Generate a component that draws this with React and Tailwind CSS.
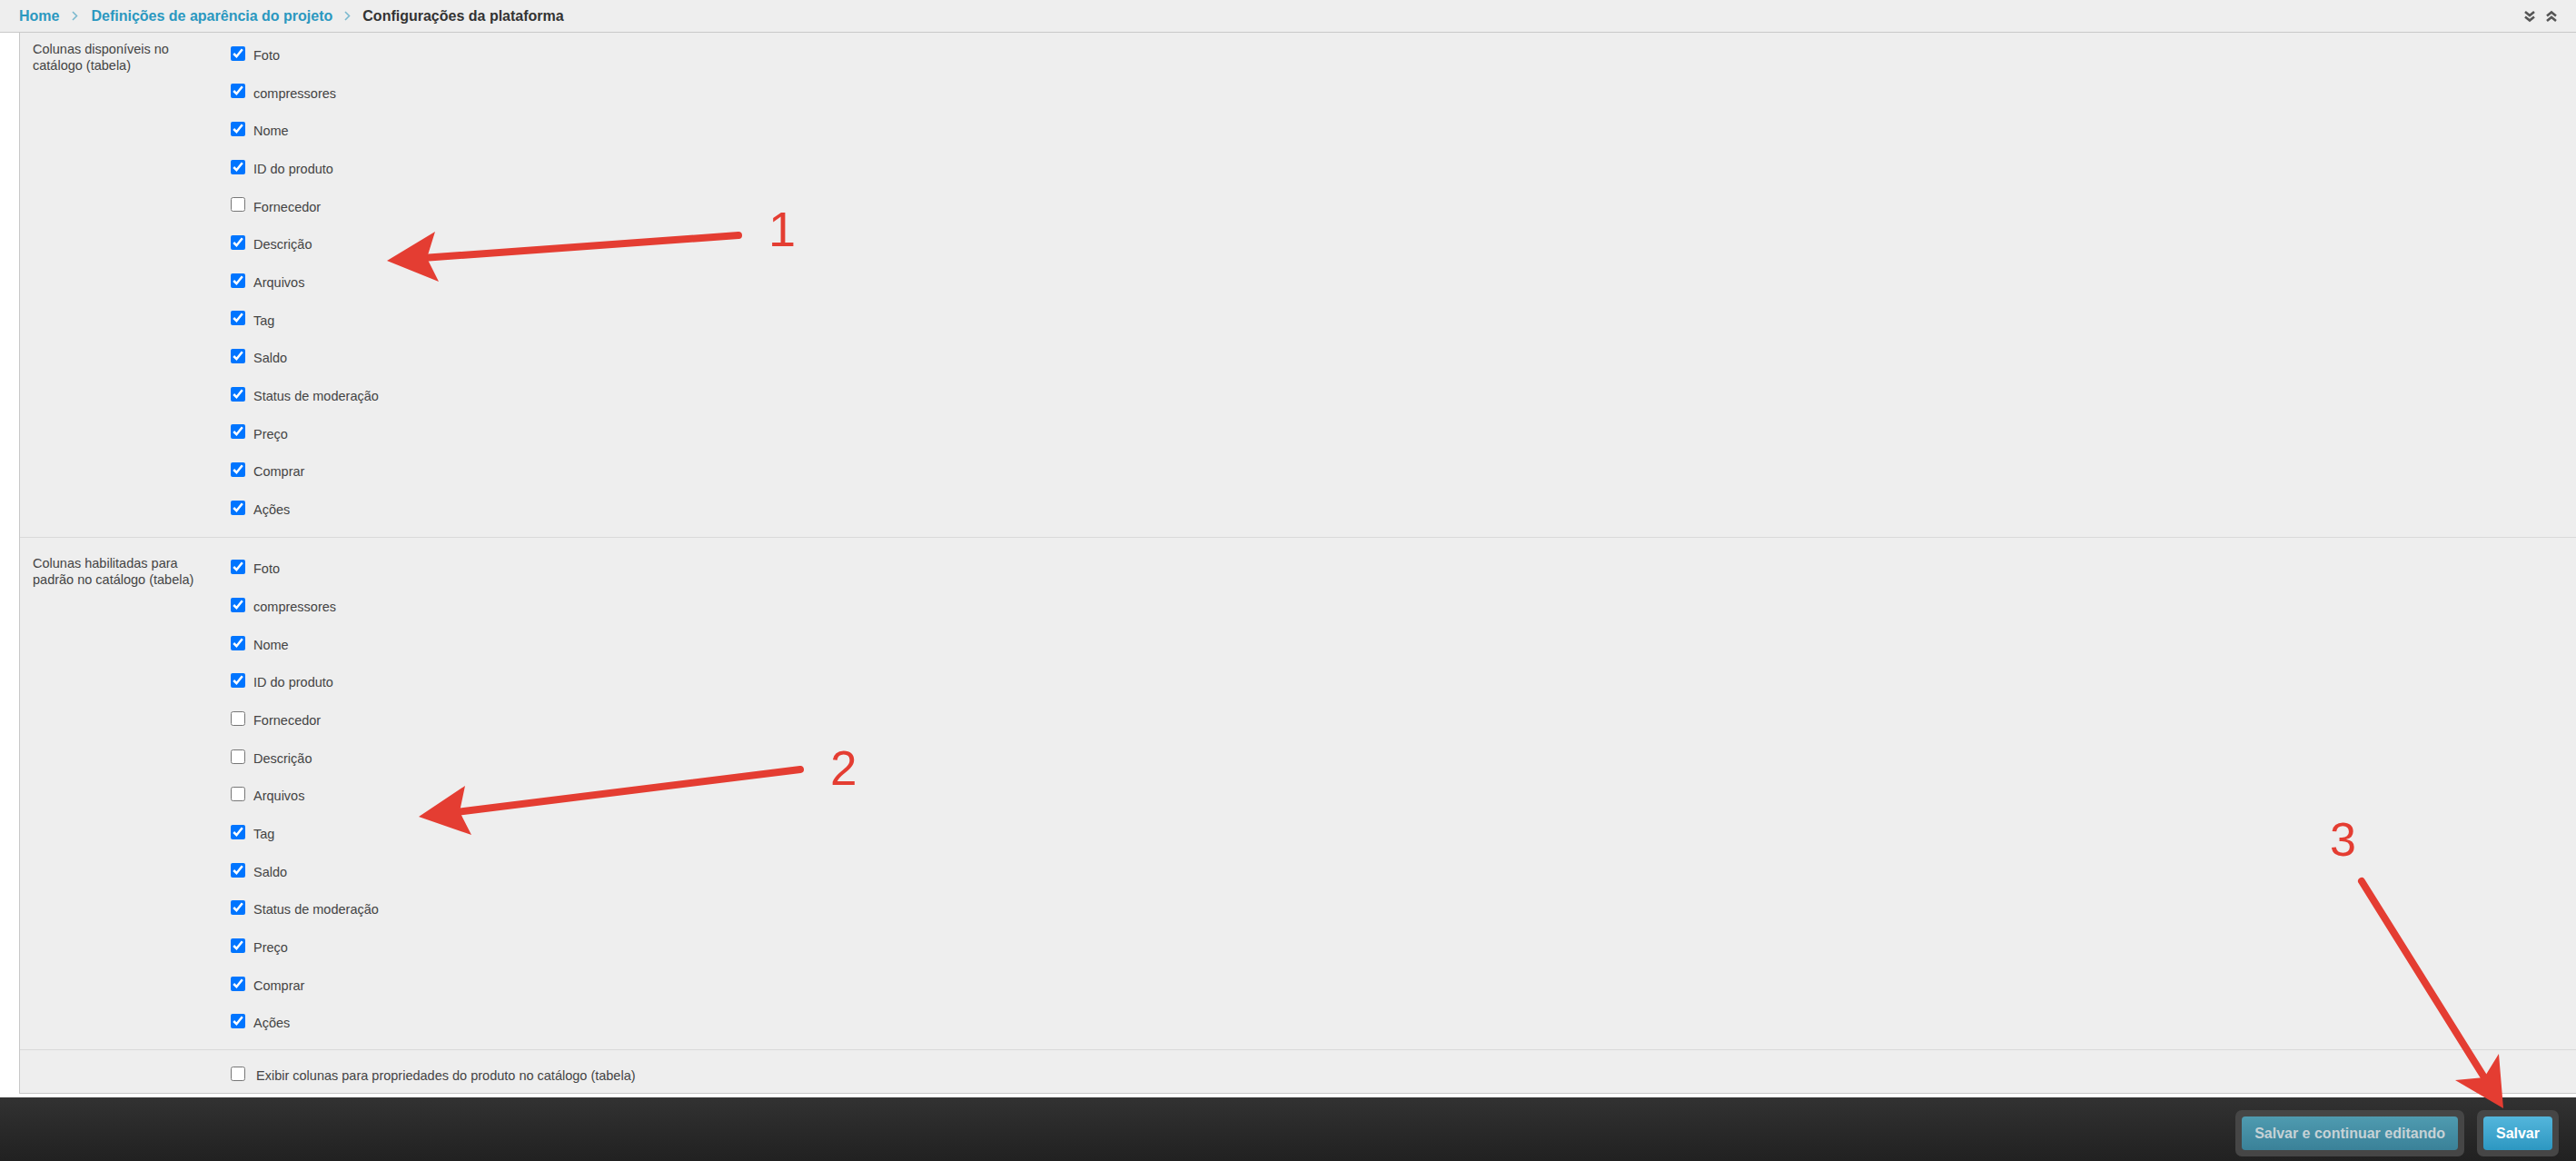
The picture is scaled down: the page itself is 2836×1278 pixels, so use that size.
import React from "react";

const sec1 = [
  ["Foto", true],
  ["compressores", true],
  ["Nome", true],
  ["ID do produto", true],
  ["Fornecedor", false],
  ["Descrição", true],
  ["Arquivos", true],
  ["Tag", true],
  ["Saldo", true],
  ["Status de moderação", true],
  ["Preço", true],
  ["Comprar", true],
  ["Ações", true],
];

const sec2 = [
  ["Foto", true],
  ["compressores", true],
  ["Nome", true],
  ["ID do produto", true],
  ["Fornecedor", false],
  ["Descrição", false],
  ["Arquivos", false],
  ["Tag", true],
  ["Saldo", true],
  ["Status de moderação", true],
  ["Preço", true],
  ["Comprar", true],
  ["Ações", true],
];

function Row({ label, checked }) {
  return (
    <label className="h-[41.67px] flex items-center">
      <input type="checkbox" defaultChecked={checked} className="w-4 h-4 shrink-0" />
      <span className="ml-[9px] pt-[6px] text-[14.5px] text-[#444]">{label}</span>
    </label>
  );
}

function Section({ title, items, className }) {
  return (
    <div className={"flex " + className}>
      <div className="w-[232px] shrink-0 pl-[14px] pt-[7px]">
        <div className="w-[185px] text-[14.5px] leading-[18px] text-[#444]">{title}</div>
      </div>
      <div className="flex flex-col">
        {items.map(([l, c], i) => (
          <Row key={i} label={l} checked={c} />
        ))}
      </div>
    </div>
  );
}

function Sep() {
  return (
    <svg width="7" height="11" viewBox="0 0 7 11" className="shrink-0">
      <polyline points="1,1 5.5,5.5 1,10" fill="none" stroke="#7bb9cf" strokeWidth="1.6" />
    </svg>
  );
}

export default function App() {
  return (
    <div className="relative w-[2836px] h-[1278px] flex flex-col bg-white font-['Liberation_Sans',Arial,sans-serif] overflow-hidden">
      {/* header */}
      <div className="h-[36px] shrink-0 border-b border-[#c9c9c9] bg-[#eeeeee] flex items-center pl-[21px] pr-[20px]">
        <div className="flex items-center text-[16px] font-bold">
          <span className="text-[#2b98c0]">Home</span>
          <span className="mx-[14px] flex"><Sep /></span>
          <span className="text-[#2b98c0]">Definições de aparência do projeto</span>
          <span className="mx-[13px] flex"><Sep /></span>
          <span className="text-[#333]">Configurações da plataforma</span>
        </div>
        <div className="ml-auto flex items-center gap-[10px]">
          <svg width="14" height="14" viewBox="0 0 14 14">
            <polyline points="2,2 7,6 12,2" fill="none" stroke="#555" strokeWidth="2.6" />
            <polyline points="2,7.5 7,11.5 12,7.5" fill="none" stroke="#555" strokeWidth="2.6" />
          </svg>
          <svg width="14" height="14" viewBox="0 0 14 14">
            <polyline points="2,6.5 7,2.5 12,6.5" fill="none" stroke="#555" strokeWidth="2.6" />
            <polyline points="2,12 7,8 12,12" fill="none" stroke="#555" strokeWidth="2.6" />
          </svg>
        </div>
      </div>

      {/* main */}
      <div className="flex-1 pl-[21px] flex flex-col">
        <div className="border-l border-b border-[#c8c8c8] bg-[#eeeeee]">
          <Section
            title="Colunas disponíveis no catálogo (tabela)"
            items={sec1}
            className="pt-[2px] pb-[11px]"
          />
          <Section
            title="Colunas habilitadas para padrão no catálogo (tabela)"
            items={sec2}
            className="border-t border-[#d9d9d9] pt-[12px] pb-[10px]"
          />
          <div className="flex border-t border-[#d9d9d9] pt-[5px]">
            <div className="w-[232px] shrink-0" />
            <label className="h-[41.67px] flex items-center">
              <input type="checkbox" className="w-4 h-4 shrink-0" />
              <span className="ml-[12px] pt-[6px] text-[14.5px] text-[#444]">
                Exibir colunas para propriedades do produto no catálogo (tabela)
              </span>
            </label>
          </div>
        </div>
      </div>

      {/* footer */}
      <div className="h-[70px] shrink-0 bg-linear-to-b from-[#323232] to-[#212121] flex items-start justify-end pt-[14px] pr-[19px] gap-[14px]">
        <div className="p-[7px] bg-[#464646] rounded-[7px]">
          <button className="h-[37px] px-[14px] rounded-[4px] bg-linear-to-b from-[#4f9bb0] to-[#3a8198] text-[#c6d2d6] text-[16px] font-bold">
            Salvar e continuar editando
          </button>
        </div>
        <div className="p-[7px] bg-[#464646] rounded-[7px]">
          <button className="h-[37px] px-[14px] rounded-[4px] bg-linear-to-b from-[#53b6dc] to-[#2c97c1] text-white text-[16px] font-bold">
            Salvar
          </button>
        </div>
      </div>

      {/* annotations */}
      <svg className="absolute inset-0 pointer-events-none" width="2836" height="1278" viewBox="0 0 2836 1278">
        <g fill="#e43d32" stroke="none">
          <line x1="813" y1="259" x2="472" y2="283.6" stroke="#e43d32" strokeWidth="8" strokeLinecap="round" />
          <polygon points="426,287 479,255 470,284 483,310" />
          <line x1="881" y1="847" x2="508" y2="893.3" stroke="#e43d32" strokeWidth="8" strokeLinecap="round" />
          <polygon points="461,899 512,865 506,893.5 519,919" />
          <line x1="2600" y1="970" x2="2735" y2="1186" stroke="#e43d32" strokeWidth="8" strokeLinecap="round" />
          <polygon points="2756,1220 2703,1189 2735,1186 2751,1160" />
          <text x="846" y="271" fontSize="54" fontFamily="Liberation Sans, Arial, sans-serif">1</text>
          <text x="914" y="864" fontSize="53" fontFamily="Liberation Sans, Arial, sans-serif">2</text>
          <text x="2565" y="942" fontSize="52" fontFamily="Liberation Sans, Arial, sans-serif">3</text>
        </g>
      </svg>
    </div>
  );
}
